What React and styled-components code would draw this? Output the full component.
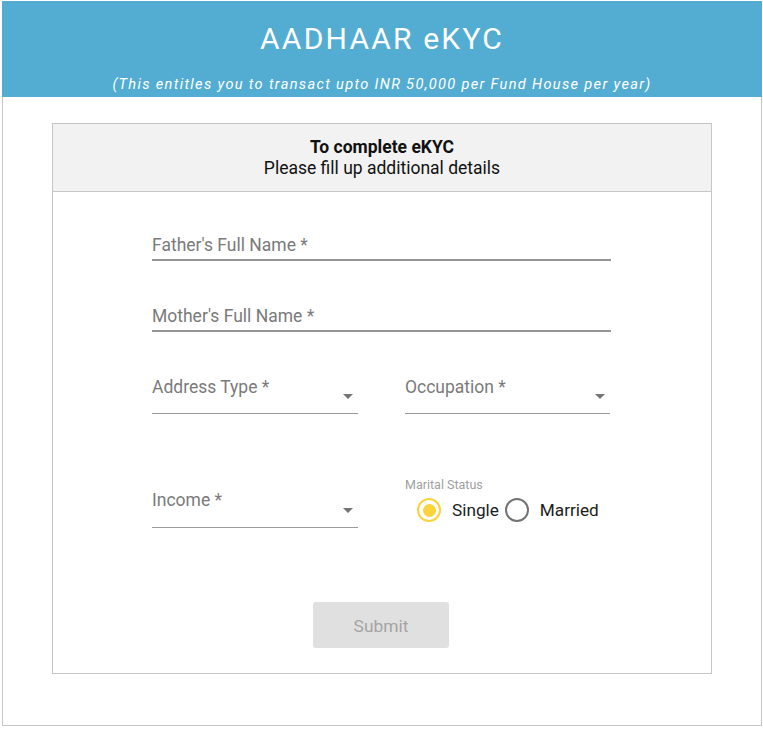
import React from 'react';
import styled, { createGlobalStyle } from 'styled-components';

const GlobalStyle = createGlobalStyle`
  body {
    margin: 0;
    background: #ffffff;
    font-family: Roboto, 'Noto Sans', sans-serif;
  }
`;

const Frame = styled.div`
  margin: 1px 0 0 2px;
  width: 760px;
  height: 725px;
  box-sizing: border-box;
  border: 1px solid #c6c6c6;
  border-top: none;
`;

const Header = styled.header`
  background: #53acd1;
  height: 96px;
  margin: 0 -1px;
  color: #ffffff;
  text-align: center;
  display: flex;
  flex-direction: column;
  align-items: center;
`;

const Title = styled.h1`
  margin: 20px 0 0;
  font-size: 30px;
  font-weight: 400;
  line-height: 36px;
  letter-spacing: 2.2px;
`;

const Subtitle = styled.p`
  margin: 18px 0 0;
  font-size: 14.6px;
  font-style: italic;
  line-height: 18px;
  letter-spacing: 1.32px;
`;

const Card = styled.section`
  margin: 26px 49px 0;
  border: 1px solid #c6c6c6;
`;

const CardHead = styled.div`
  background: #f2f2f2;
  border-bottom: 1px solid #c6c6c6;
  padding: 13px 0 12px;
  text-align: center;
  font-size: 17.5px;
  line-height: 21px;
  color: #111111;
`;

const HeadLine = styled.div`
  font-weight: ${(p) => (p.$bold ? 700 : 400)};
`;

const Form = styled.form`
  padding: 29px 100px 25px 99px;
  display: flex;
  flex-direction: column;
`;

const TextField = styled.div`
  height: 40px;
  box-sizing: border-box;
  border-bottom: 2px solid #949494;
  display: flex;
  align-items: flex-end;
  padding-bottom: 4px;
  margin-top: ${(p) => p.$gap || 0}px;
`;

const Label = styled.span`
  font-size: 17.5px;
  line-height: 20px;
  color: #7a7a7a;
`;

const Row = styled.div`
  display: grid;
  grid-template-columns: 206px 205px;
  column-gap: 47px;
  margin-top: ${(p) => p.$gap}px;
`;

const SelectField = styled.div`
  height: 50px;
  box-sizing: border-box;
  border-bottom: 1px solid #9a9a9a;
  padding-top: ${(p) => p.$top}px;
  position: relative;
`;

const Arrow = styled.span`
  position: absolute;
  right: 5px;
  top: 30px;
  width: 0;
  height: 0;
  border-left: 5px solid transparent;
  border-right: 5px solid transparent;
  border-top: 5px solid #757575;
`;

const Marital = styled.div`
  display: flex;
  flex-direction: column;
`;

const SmallLabel = styled.span`
  font-size: 12.5px;
  line-height: 14px;
  color: #a0a0a0;
`;

const Radios = styled.div`
  display: flex;
  align-items: center;
  margin: 6px 0 0 12px;
  height: 24px;
`;

const RadioCircle = styled.span`
  width: 24px;
  height: 24px;
  box-sizing: border-box;
  border-radius: 50%;
  border: 2.5px solid ${(p) => (p.$checked ? '#fbd33b' : '#737373')};
  display: flex;
  align-items: center;
  justify-content: center;
  margin-right: ${(p) => p.$space}px;

  &::after {
    content: '';
    display: ${(p) => (p.$checked ? 'block' : 'none')};
    width: 13px;
    height: 13px;
    border-radius: 50%;
    background: #fbd33b;
  }
`;

const RadioText = styled.span`
  font-size: 17.2px;
  line-height: 24px;
  color: #1c1c1c;
  margin-right: ${(p) => p.$space || 0}px;
`;

const Submit = styled.button`
  align-self: center;
  margin: 74px 0 0 -1px;
  width: 136px;
  height: 46px;
  padding: 2px 0 0;
  border: none;
  border-radius: 3px;
  background: #e0e0e0;
  color: #a4a4a4;
  font-family: Roboto, sans-serif;
  font-size: 17.4px;
`;

const Select = ({ label, top = 13 }) => (
  <SelectField $top={top}>
    <Label>{label}</Label>
    <Arrow />
  </SelectField>
);

export default function App() {
  return (
    <>
      <GlobalStyle />
      <Frame>
        <Header>
          <Title>AADHAAR eKYC</Title>
          <Subtitle>
            (This entitles you to transact upto INR 50,000 per Fund House per year)
          </Subtitle>
        </Header>
        <Card>
          <CardHead>
            <HeadLine $bold>To complete eKYC</HeadLine>
            <HeadLine>Please fill up additional details</HeadLine>
          </CardHead>
          <Form>
            <TextField>
              <Label>Father's Full Name *</Label>
            </TextField>
            <TextField $gap={31}>
              <Label>Mother's Full Name *</Label>
            </TextField>
            <Row $gap={32}>
              <Select label="Address Type *" />
              <Select label="Occupation *" />
            </Row>
            <Row $gap={64}>
              <Select label="Income *" top={12} />
              <Marital>
                <SmallLabel>Marital Status</SmallLabel>
                <Radios>
                  <RadioCircle $checked $space={11} />
                  <RadioText $space={6}>Single</RadioText>
                  <RadioCircle $space={11} />
                  <RadioText>Married</RadioText>
                </Radios>
              </Marital>
            </Row>
            <Submit type="button">Submit</Submit>
          </Form>
        </Card>
      </Frame>
    </>
  );
}
